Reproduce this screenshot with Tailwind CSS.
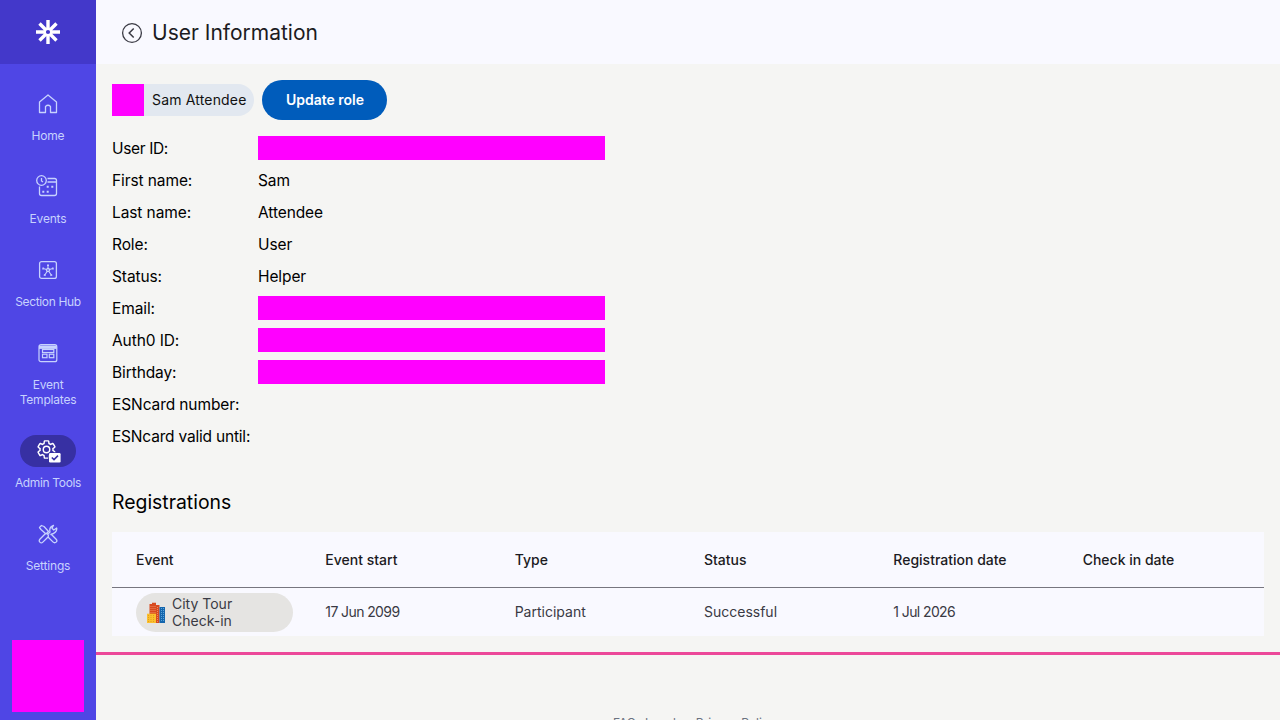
<!DOCTYPE html>
<html lang="en"><head><meta charset="utf-8"><title>User Information</title>
<script src="https://cdn.jsdelivr.net/npm/@tailwindcss/browser@4"></script></head>
<body class="m-0 w-[1280px] h-[720px] overflow-hidden bg-[#f5f5f3] font-['Inter',sans-serif] text-black">
<div class="flex h-[720px] overflow-hidden">
<aside class="w-24 shrink-0 h-full bg-[#4f46e5] flex flex-col">
  <div class="h-16 shrink-0 bg-[#4338ca] flex items-center justify-center">
    <svg width="24" height="24" viewBox="0 0 24 24" fill="none" stroke="#fff" stroke-width="3.4"><path d="M12 0V9M12 15V24M0 12H9M15 12H24M3.5 3.5L9.5 9.5M14.5 14.5L20.5 20.5M20.5 3.5L14.5 9.5M9.5 14.5L3.5 20.5"/><circle cx="12" cy="12" r="3" stroke-width="1.8" fill="#4338ca"/></svg>
  </div>
  <nav class="flex flex-col gap-7 pt-6 text-[12px] leading-[15px] tracking-[-0.2px] text-[#c7d2fe] text-center">
    <a class="flex flex-col items-center gap-2"><span class="w-14 h-8 rounded-full flex items-center justify-center">
      <svg width="20" height="20" viewBox="0 0 20 20" fill="none" stroke="#c7d2fe" stroke-width="1.3" stroke-linejoin="round"><path d="M1.5 18.5V8L10 1L18.5 8V18.5H12.5V12.5Q10 10 7.5 12.5V18.5Z"/></svg></span><span>Home</span></a>
    <a class="flex flex-col items-center gap-2"><span class="w-14 h-8 rounded-full flex items-center justify-center">
      <svg width="24" height="24" viewBox="0 0 24 24" fill="none" stroke="#c7d2fe" stroke-width="1.3"><circle cx="5.5" cy="5.5" r="4.8"/><path d="M5.5 3V6L7 7M11.5 3.5H18.5Q20.5 3.5 20.5 5.5V18.5Q20.5 20.5 18.5 20.5H5.5Q3.5 20.5 3.5 18.5V11.5M11.5 7H20.5"/><path d="M10.7 11.7h2M15.3 11.7h2M6.3 16.7h2M10.7 16.7h2" stroke-width="2"/></svg></span><span>Events</span></a>
    <a class="flex flex-col items-center gap-2"><span class="w-14 h-8 rounded-full flex items-center justify-center">
      <svg width="20" height="20" viewBox="0 0 20 20" fill="none" stroke="#c7d2fe" stroke-width="1.3"><rect x="1.6" y="1.6" width="16.8" height="16.8" rx="2"/><path d="M10 5.5V10M10 10L5.3 8.5M10 10L14.7 8.5M10 10L6.8 15M10 10L13.2 15" stroke-width="1.1"/><circle cx="10" cy="10" r="1.5" fill="#4f46e5"/><path d="M10 4.5v1.5M4.4 8.2l1.4.5M15.6 8.2l-1.4.5M6.3 15.8l.8-1.3M13.7 15.8l-.8-1.3" stroke-width="2"/></svg></span><span class="tracking-[-0.35px]">Section Hub</span></a>
    <a class="flex flex-col items-center gap-2"><span class="w-14 h-8 rounded-full flex items-center justify-center">
      <svg width="20" height="20" viewBox="0 0 20 20" fill="none" stroke="#c7d2fe" stroke-width="1.2"><rect x="1" y="1.7" width="17.8" height="17" rx="2"/><path d="M1 4.2H18.8" stroke-width="3.4"/><rect x="4.5" y="6.5" width="11.3" height="3"/><rect x="4.5" y="11.2" width="4.5" height="3.5"/><rect x="11.3" y="11.2" width="4.5" height="3.5"/></svg></span><span>Event<br>Templates</span></a>
    <a class="flex flex-col items-center gap-2"><span class="w-14 h-8 rounded-full bg-[#3730a3] flex items-center justify-center">
      <svg width="26" height="26" viewBox="0 0 26 26" fill="none" stroke="#fff"><g transform="translate(0.7,0.7) scale(0.9)" stroke-width="1.6"><path d="M19.14 12.94c.04-.3.06-.61.06-.94 0-.32-.02-.64-.07-.94l2.03-1.58c.18-.14.23-.41.12-.61l-1.92-3.32c-.12-.22-.37-.29-.59-.22l-2.39.96c-.5-.38-1.03-.7-1.62-.94l-.36-2.54c-.04-.24-.24-.41-.48-.41h-3.84c-.24 0-.43.17-.47.41l-.36 2.54c-.59.24-1.13.57-1.62.94l-2.39-.96c-.22-.08-.47 0-.59.22L2.74 8.87c-.12.21-.08.47.12.61l2.03 1.58c-.05.3-.09.63-.09.94s.02.64.07.94l-2.03 1.58c-.18.14-.23.41-.12.61l1.92 3.32c.12.22.37.29.59.22l2.39-.96c.5.38 1.03.7 1.62.94l.36 2.54c.05.24.24.41.48.41h3.84c.24 0 .44-.17.47-.41l.36-2.54c.59-.24 1.13-.56 1.62-.94l2.39.96c.22.08.47 0 .59-.22l1.92-3.32c.12-.22.07-.47-.12-.61l-2.01-1.58z"/><circle cx="12" cy="12" r="3.6"/></g><rect x="14" y="15" width="11.6" height="9.4" rx="1.2" fill="#fff" stroke="#3730a3" stroke-width="1.5"/><rect x="14" y="15" width="11.6" height="9.4" rx="1.2" fill="#fff" stroke="none"/><path d="M16.8 19.5L19 21.6L23 17.6" stroke="#3730a3" stroke-width="1.5"/></svg></span><span class="tracking-[-0.35px]">Admin Tools</span></a>
    <a class="flex flex-col items-center gap-2"><span class="w-14 h-8 rounded-full flex items-center justify-center">
      <svg width="20" height="20" viewBox="0 0 20 20" fill="none" stroke="#c7d2fe" stroke-width="1.3" stroke-linejoin="round"><path d="M1.5 3.5L3.5 1.5L6 2.5L10.5 7.5L8 10L3 5.5Z"/><g transform="translate(14.2,14.2) rotate(45)"><rect x="-5.6" y="-2.1" width="11.2" height="4.2" rx="2.1"/></g><g transform="translate(5.8,14.2) rotate(-45)"><rect x="-5.6" y="-2.1" width="11.2" height="4.2" rx="2.1" fill="#4f46e5"/></g><path d="M9.5 10.5L12 8Q10.8 3 15.5 1.3L14 4.3L15.8 6L18.7 4Q19.4 8.8 12.5 10.5" fill="#4f46e5"/></svg></span><span>Settings</span></a>
  </nav>
  <div class="mt-auto mb-2 mx-3 w-[72px] h-[72px] bg-[#ff00ff]"></div>
</aside>
<div class="flex-1 min-w-0 flex flex-col">
  <header class="h-16 shrink-0 bg-[#f9f9ff] flex items-center gap-[9px] pl-[25px]">
    <svg class="mt-0.5" width="22" height="22" viewBox="0 0 22 22" fill="none" stroke="#3a3a44" stroke-width="1.3"><circle cx="11" cy="11" r="9.4"/><path d="M12.7 6.5L8.2 11L12.7 15.5" stroke-width="1.5"/></svg>
    <h1 class="pt-0.5 text-[21px] leading-8 text-[#1c1b22] font-normal">User Information</h1>
  </header>
  <main class="px-4 pt-4">
    <div class="flex items-center gap-2">
      <div class="flex items-center h-8 rounded-r-full bg-[#e2e8f0]">
        <div class="w-8 h-8 bg-[#ff00ff]"></div>
        <span class="px-2 text-sm tracking-[0.17px] text-[#111]">Sam Attendee</span>
      </div>
      <button class="h-10 w-[125px] rounded-full bg-[#005cbb] text-white text-sm font-semibold">Update role</button>
    </div>
    <div class="mt-4 grid grid-cols-[138px_347px] auto-rows-[24px] gap-x-2 gap-y-2 leading-[26px] text-[15.5px] tracking-[-0.1px] whitespace-nowrap">
      <span class="tracking-[-0.35px]">User ID:</span><span class="h-6 bg-[#ff00ff]"></span>
      <span>First name:</span><span>Sam</span>
      <span>Last name:</span><span>Attendee</span>
      <span>Role:</span><span>User</span>
      <span>Status:</span><span>Helper</span>
      <span>Email:</span><span class="h-6 bg-[#ff00ff]"></span>
      <span>Auth0 ID:</span><span class="h-6 bg-[#ff00ff]"></span>
      <span>Birthday:</span><span class="h-6 bg-[#ff00ff]"></span>
      <span>ESNcard number:</span><span class="h-6"></span>
      <span class="tracking-[-0.2px]">ESNcard valid until:</span><span class="h-6"></span>
    </div>
    <h2 class="mt-10 text-[19.4px] leading-7 font-normal">Registrations</h2>
    <div class="mt-4 bg-[#f9f9ff] text-sm text-[#1c1b22]">
      <div class="grid grid-cols-[repeat(6,189.33px)] pl-6 h-14 items-center border-b border-[#77767f] font-medium">
        <span>Event</span><span>Event start</span><span>Type</span><span>Status</span><span>Registration date</span><span>Check in date</span>
      </div>
      <div class="grid grid-cols-[repeat(6,189.33px)] pl-6 h-12 items-center text-[#3a3a44]">
        <div class="flex items-center gap-[7px] w-[157px] h-[39px] rounded-full bg-[#e5e4e2] pl-[11px]">
          <svg width="18" height="21" viewBox="0 0 18 21" fill="none"><path d="M2.5 21V2H5V0.8H9V3H12.5V21Z" fill="#d84a1f"/><rect x="12.5" y="5" width="5.5" height="16" fill="#1566ad"/><rect x="0" y="11.7" width="9" height="9.3" fill="#fbc02d"/><path d="M4 4V11M6 4V11M8 4V11M10.5 5V20" stroke="#f08a60" stroke-dasharray="1 1"/><path d="M14.5 6V20M16.5 6V20" stroke="#5aa4da" stroke-dasharray="1 1"/><path d="M1.5 13V20M4 13V20M6.5 13V20" stroke="#e39a1e" stroke-dasharray="1 1"/></svg>
          <span class="leading-[17px]">City Tour<br>Check-in</span>
        </div>
        <span class="tracking-[-0.6px]">17 Jun 2099</span><span>Participant</span><span>Successful</span><span class="tracking-[-0.6px]">1 Jul 2026</span><span></span>
      </div>
    </div>
  </main>
  <div class="mt-4 border-t-[3px] border-[#ec4899]"></div>
  <footer class="mt-[60px] pl-[517px] flex text-xs leading-4 text-[#6b7280]"><span class="mr-[9px]">FAQ</span><span class="mr-5">Legal</span><span>Privacy Policy</span></footer>
</div>
</div>
</body></html>
